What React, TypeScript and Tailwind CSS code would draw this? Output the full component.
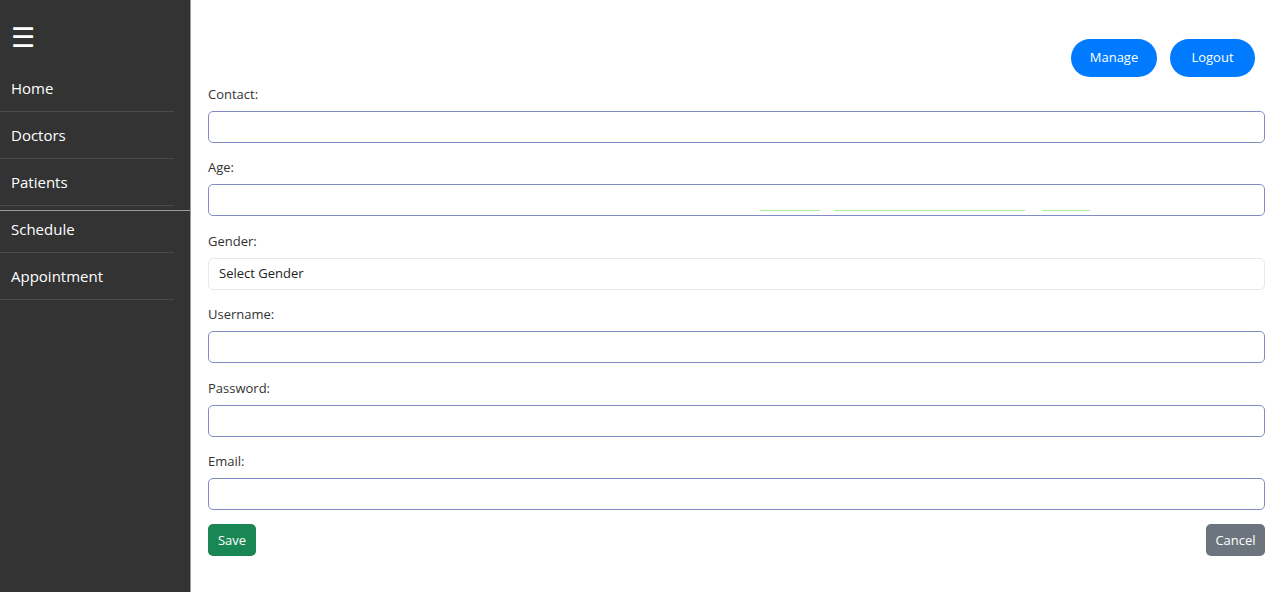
import React from 'react';

const navItems = ['Home', 'Doctors', 'Patients', 'Schedule', 'Appointment'];

const fields: { label: string; type: string }[] = [
  { label: 'Contact:', type: 'text' },
  { label: 'Age:', type: 'number' },
  { label: 'Gender:', type: 'select' },
  { label: 'Username:', type: 'text' },
  { label: 'Password:', type: 'password' },
  { label: 'Email:', type: 'email' },
];

export default function App() {
  return (
    <div className="flex min-h-[592px] w-full bg-white font-['Open_Sans',sans-serif]">
      {/* Sidebar */}
      <aside className="relative w-[191px] shrink-0 bg-[#333333] border-r border-[#9c9c9c]">
        <div className="h-[65px] pl-[11px] pt-[23px] text-[27px] leading-none text-white">☰</div>
        <nav>
          {navItems.map((item) => (
            <div
              key={item}
              className="flex h-[47px] w-[174px] items-center border-b border-[#4a4a4a] pl-[11px] text-[15px] text-white"
            >
              {item}
            </div>
          ))}
        </nav>
        <div className="absolute left-0 top-[210px] h-px w-[190px] bg-[#9a9a9a]" aria-hidden="true" />
      </aside>

      {/* Main */}
      <main className="flex-1 pl-[17px] pr-[15px]">
        <div className="flex justify-end gap-[13px] pt-[39px] pr-[10px]">
          <button className="h-[38px] w-[86px] rounded-full bg-[#007bff] text-[13px] text-white">Manage</button>
          <button className="h-[38px] w-[85px] rounded-full bg-[#007bff] text-[13px] text-white">Logout</button>
        </div>

        <form className="mt-[7px]">
          {fields.map((f) => (
            <div key={f.label} className="relative mb-[14.4px]">
              <label className="mb-[8px] block h-[19px] text-[13px] leading-[21px] text-[#333]">{f.label}</label>
              {f.type === 'select' ? (
                <div className="flex h-[32px] items-center rounded-[5px] border border-[#e8e8e8] pl-[10px] text-[13px] text-[#222]">
                  Select Gender
                </div>
              ) : (
                <input
                  type={f.type}
                  className="block h-[32px] w-full rounded-[5px] border border-[#848ac4] outline-none"
                />
              )}
              {f.label === 'Age:' && (
                <div aria-hidden="true">
                  <div className="absolute left-[552px] top-[53px] h-px w-[60px] bg-[#a8f0a0]" />
                  <div className="absolute left-[626px] top-[53px] h-px w-[191px] bg-[#a8f0a0]" />
                  <div className="absolute left-[834px] top-[53px] h-px w-[48px] bg-[#a8f0a0]" />
                </div>
              )}
            </div>
          ))}

          <div className="flex justify-between">
            <button type="button" className="h-[32px] w-[48px] rounded-[5px] bg-[#198754] text-[13px] text-white">
              Save
            </button>
            <button type="button" className="h-[32px] w-[59px] rounded-[5px] bg-[#6c757d] text-[13px] text-white">
              Cancel
            </button>
          </div>
        </form>
      </main>
    </div>
  );
}
